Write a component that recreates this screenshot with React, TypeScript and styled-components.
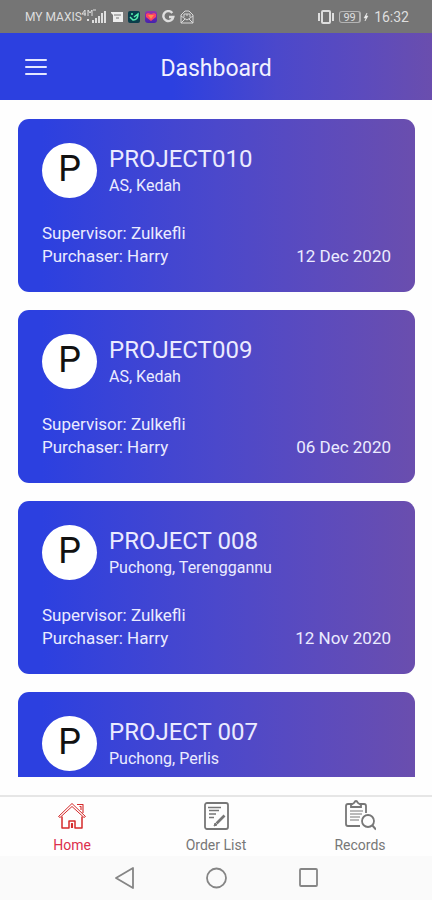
import React from "react";
import styled, { createGlobalStyle } from "styled-components";

const GlobalStyle = createGlobalStyle`
  * { box-sizing: border-box; }
  body { margin: 0; background: #fefefe; }
  body, button { font-family: Roboto, "Liberation Sans", sans-serif; }
  button { border: 0; padding: 0; background: none; color: inherit; cursor: pointer; }
  h1, h2, p { margin: 0; font-weight: 400; }
  svg { display: block; flex: none; }
`;

const gradient = "linear-gradient(90deg, #2c40e0 0%, #2c40e0 6%, #4b48cb 50%, #5c4bbd 76%, #6a4eae 100%)";

const Screen = styled.div`
  display: flex;
  flex-direction: column;
  height: 100vh;
  background: #fefefe;
`;

const StatusBar = styled.div`
  flex: none;
  display: flex;
  align-items: center;
  justify-content: space-between;
  height: 33px;
  padding: 0 23px 0 25px;
  background: #757575;
  color: #dedede;
`;

const StatusGroup = styled.div<{ $gap: number }>`
  display: flex;
  align-items: center;
  gap: ${({ $gap }) => $gap}px;
`;

const Carrier = styled.span`
  font-size: 12px;
  line-height: 16px;
`;

const Clock = styled.time`
  font-size: 14px;
  line-height: 16px;
`;

const Header = styled.header`
  flex: none;
  display: grid;
  grid-template-columns: 48px 1fr 48px;
  align-items: center;
  height: 67px;
  padding: 0 12px;
  background: linear-gradient(90deg, #2c40e0 0%, #2c40e0 40%, #4b48cb 64%, #5c4bbd 84%, #6a4eae 100%);
  color: #f1f1ff;
`;

const MenuButton = styled.button`
  display: grid;
  place-items: center;
  height: 48px;
`;

const Title = styled.h1`
  padding-top: 4px;
  text-align: center;
  font-size: 23px;
  line-height: 32px;
`;

const ProjectList = styled.main`
  flex: 1;
  min-height: 0;
  display: flex;
  flex-direction: column;
  gap: 18px;
  margin: 19px 17px 18px 18px;
  overflow-y: auto;
  scrollbar-width: none;
`;

const Card = styled.article`
  flex: none;
  display: flex;
  flex-direction: column;
  justify-content: space-between;
  min-height: 173px;
  padding: 24px;
  border-radius: 11px;
  background: ${gradient};
  color: #ebebff;
`;

const CardHead = styled.div`
  display: flex;
  gap: 12px;
`;

const Avatar = styled.div`
  flex: none;
  display: grid;
  place-items: center;
  width: 55px;
  height: 55px;
  padding-bottom: 3px;
  border-radius: 50%;
  background: #fff;
  color: #111;
  font-size: 36px;
  line-height: 40px;
`;

const ProjectName = styled.h2`
  font-size: 24px;
  line-height: 32px;
`;

const Place = styled.p`
  font-size: 16px;
  line-height: 22px;
`;

const CardFoot = styled.div`
  display: flex;
  align-items: flex-end;
  justify-content: space-between;
  font-size: 17px;
  line-height: 23px;
`;

const TabBar = styled.nav`
  flex: none;
  display: grid;
  grid-template-columns: repeat(3, 1fr);
  height: 61px;
  border-top: 2px solid #e6e6e6;
  background: #fefefe;
`;

const Tab = styled.button<{ $active?: boolean }>`
  display: flex;
  flex-direction: column;
  align-items: center;
  gap: 5px;
  padding-top: 2px;
  color: ${({ $active }) => ($active ? "#dc2f4c" : "#777")};
  font-size: 14px;
  line-height: 18px;
`;

const SystemNav = styled.nav`
  flex: none;
  display: flex;
  align-items: center;
  justify-content: center;
  gap: 60px;
  height: 44px;
  background: #fafafa;
  color: #858585;
`;

const SystemButton = styled.button`
  display: grid;
  place-items: center;
  width: 32px;
  height: 32px;
`;

const Signal = () => (
  <svg width="24" height="16" viewBox="0 0 24 16" fill="#dedede">
    <path d="M3 1 0 5h4M3 1v6M6 7V1l2 3 2-3v6M11 1h3" fill="none" stroke="#dedede" />
    <path d="M10 11h2v3h-2zM13 9h2v5h-2zM16 7h2v7h-2zM19 4h2v10h-2zM22 2h2v12h-2zM5 10h2v2H5z" />
  </svg>
);

const MessageIcon = () => (
  <svg width="12" height="12" viewBox="0 0 12 12">
    <path d="M0 1h12v10H2V4L0 2z" fill="#ededed" />
    <path d="M3 4h7M5 7h3" stroke="#777" />
  </svg>
);

const GreenApp = () => (
  <svg width="12" height="12" viewBox="0 0 12 12">
    <rect width="12" height="12" rx="2" fill="#093d4b" />
    <path d="M2 6l3 3q5 0 5-6L6 6M3 3h2" fill="none" stroke="#55efae" strokeWidth="1.500" />
  </svg>
);

const HeartApp = () => (
  <svg width="12" height="12" viewBox="0 0 12 12">
    <defs>
      <linearGradient id="heart-bg" x2="0" y2="1">
        <stop stopColor="#9336ac" />
        <stop offset="1" stopColor="#4421ae" />
      </linearGradient>
    </defs>
    <rect width="12" height="12" rx="3" fill="url(#heart-bg)" />
    <path d="M6 10 1 6V3l2-1 3 1 3-1 2 1v3z" fill="#fb4265" />
    <path d="M3 4h6L6 8z" fill="#ff8b49" />
  </svg>
);

const GoogleIcon = () => (
  <svg width="13" height="13" viewBox="0 0 13 13" fill="none" stroke="#dedede" strokeWidth="2.400">
    <path d="M10.300 3A5 5 0 1 0 11.300 7H7" />
  </svg>
);

const MailIcon = () => (
  <svg width="14" height="14" viewBox="0 0 14 14" fill="none" stroke="#d8d8d8">
    <path d="M1 5 5 1h4l4 4v8H1zM1 6l6 4 6-4M1 13l4-4M13 13 9 9M4 7V4h6v3M6 5h2" />
  </svg>
);

const VibrateIcon = () => (
  <svg width="16" height="14" viewBox="0 0 16 14" fill="none" stroke="#dedede">
    <rect x="4" y="1" width="8" height="12" rx="1" strokeWidth="2" />
    <path d="M1 3v8M15 3v8" strokeWidth="2" />
  </svg>
);

const Battery = styled.span`
  display: grid;
  place-items: center;
  width: 22px;
  height: 12px;
  border: 1px solid #b4b4b4;
  border-right-width: 2px;
  border-radius: 3px;
  font-size: 11px;
  line-height: 11px;
`;

const BoltIcon = () => (
  <svg width="6" height="12" viewBox="0 0 6 12">
    <path d="M4 2 1 7h2l-1 3 3-5H3z" fill="#eee" stroke="#eee" strokeWidth="0.500" />
  </svg>
);

const MenuIcon = () => (
  <svg width="22" height="18" viewBox="0 0 22 18" stroke="#e4e7ff" strokeWidth="2" strokeLinecap="round">
    <path d="M1 2h20M1 9h20M1 16h20" />
  </svg>
);

const HomeIcon = () => (
  <svg width="32" height="32" viewBox="0 0 32 32" fill="none" stroke="#d52b2b" strokeWidth="1.500" strokeLinejoin="round">
    <path d="M2.500 17.500 16 4.500l13.500 13-1.500 1L16 7.500 4 18.500z" strokeWidth="1" />
    <path d="M6 17.500V29h7v-7h6v7h7V17.500" />
    <path d="M15.500 29v-4.500h1V29M21 5.500h6v8.500M23.500 7.500h1.500V11" strokeWidth="1.100" />
  </svg>
);

const OrderIcon = () => (
  <svg width="32" height="32" viewBox="0 0 32 32" fill="none" stroke="#777">
    <rect x="5" y="4" width="23" height="26" rx="2" strokeWidth="1.800" />
    <path d="M8 8.500h13M9 11.500h10M9 15h7M9 18.500h5" strokeWidth="1.500" />
    <path d="m16.500 24.500 8-8" strokeWidth="2.600" />
    <path d="m14 27 1-3 2 2z" fill="#777" />
  </svg>
);

const RecordsIcon = () => (
  <svg width="32" height="32" viewBox="0 0 32 32" fill="none" stroke="#777" strokeWidth="1.800">
    <path d="M8 5H4q-2 0-2 2v18q0 2 2 2h12M16 5h4q2 0 2 2v7" />
    <path d="M7 8V6l3-2q2-4 4 0l3 2v2z" />
    <path d="M6 12h13M6 15h12M6 18h10M6 21h9" strokeWidth="1.200" />
    <circle cx="24" cy="22" r="6" />
    <path d="m28 26 4 4.500" strokeWidth="2" />
  </svg>
);

const BackShape = () => (
  <svg width="20" height="22" viewBox="0 0 20 22" fill="none" stroke="currentColor" strokeWidth="1.800" strokeLinejoin="round">
    <path d="M19 1v20L2 11z" />
  </svg>
);

const CircleShape = () => (
  <svg width="22" height="22" viewBox="0 0 22 22" fill="none" stroke="currentColor" strokeWidth="1.800">
    <circle cx="11.500" cy="11" r="9.500" />
  </svg>
);

const SquareShape = () => (
  <svg width="20" height="20" viewBox="0 0 20 20" fill="none" stroke="currentColor" strokeWidth="1.800">
    <rect x="2" y="1" width="17" height="17" rx="1" />
  </svg>
);

interface Project {
  name: string;
  place: string;
  supervisor?: string;
  purchaser?: string;
  date?: string;
}

const projects: Project[] = [
  { name: "PROJECT010", place: "AS, Kedah", supervisor: "Zulkefli", purchaser: "Harry", date: "12 Dec 2020" },
  { name: "PROJECT009", place: "AS, Kedah", supervisor: "Zulkefli", purchaser: "Harry", date: "06 Dec 2020" },
  { name: "PROJECT 008", place: "Puchong, Terenggannu", supervisor: "Zulkefli", purchaser: "Harry", date: "12 Nov 2020" },
  { name: "PROJECT 007", place: "Puchong, Perlis" },
];

const ProjectCard = ({ project }: { project: Project }) => (
  <Card>
    <CardHead>
      <Avatar>{project.name[0]}</Avatar>
      <div>
        <ProjectName>{project.name}</ProjectName>
        <Place>{project.place}</Place>
      </div>
    </CardHead>
    {project.supervisor && (
      <CardFoot>
        <div>
          <p>Supervisor: {project.supervisor}</p>
          <p>Purchaser: {project.purchaser}</p>
        </div>
        <time>{project.date}</time>
      </CardFoot>
    )}
  </Card>
);

export default function App() {
  return (
    <>
      <GlobalStyle />
      <Screen>
        <StatusBar>
          <StatusGroup $gap={5}>
            <StatusGroup $gap={0}>
              <Carrier>MY MAXIS</Carrier>
              <Signal />
            </StatusGroup>
            <MessageIcon />
            <GreenApp />
            <HeartApp />
            <GoogleIcon />
            <MailIcon />
          </StatusGroup>
          <StatusGroup $gap={5}>
            <VibrateIcon />
            <StatusGroup $gap={2}>
              <Battery>99</Battery>
              <BoltIcon />
            </StatusGroup>
            <Clock>16:32</Clock>
          </StatusGroup>
        </StatusBar>
        <Header>
          <MenuButton aria-label="Open menu">
            <MenuIcon />
          </MenuButton>
          <Title>Dashboard</Title>
        </Header>
        <ProjectList>
          {projects.map((project) => (
            <ProjectCard key={project.name} project={project} />
          ))}
        </ProjectList>
        <TabBar>
          <Tab $active aria-current="page">
            <HomeIcon />
            Home
          </Tab>
          <Tab>
            <OrderIcon />
            Order List
          </Tab>
          <Tab>
            <RecordsIcon />
            Records
          </Tab>
        </TabBar>
        <SystemNav>
          <SystemButton aria-label="Back">
            <BackShape />
          </SystemButton>
          <SystemButton aria-label="Home screen">
            <CircleShape />
          </SystemButton>
          <SystemButton aria-label="Recent apps">
            <SquareShape />
          </SystemButton>
        </SystemNav>
      </Screen>
    </>
  );
}
